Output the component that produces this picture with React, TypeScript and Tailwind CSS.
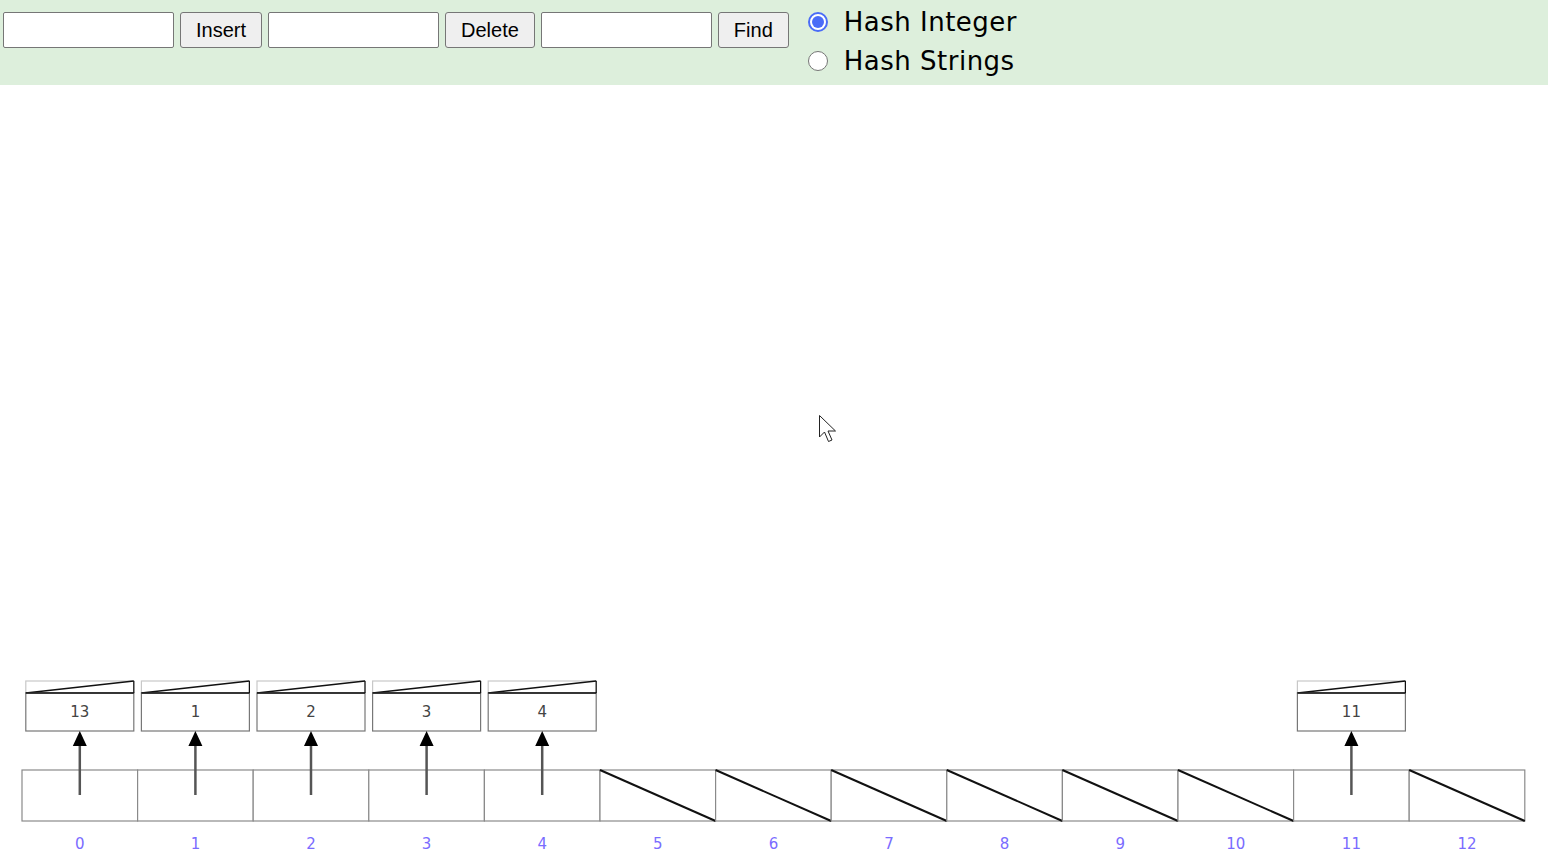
const CELL_X = 22;
const CELL_W = 115.6;
const CELL_Y = 770;
const CELL_H = 51;
const BUCKETS = 13;

// bucket index -> value stored in its single node
const nodes: Record<number, string> = { 0: '13', 1: '1', 2: '2', 3: '3', 4: '4', 11: '11' };

function Radio({ checked, label }: { checked?: boolean; label: string }) {
  return (
    <label className="flex items-center gap-[16px] h-[39px]">
      {checked ? (
        <span className="flex h-[20px] w-[20px] items-center justify-center rounded-full border-2 border-[#4a6cf7] bg-white">
          <span className="h-[12px] w-[12px] rounded-full bg-[#4a6cf7]" />
        </span>
      ) : (
        <span className="h-[20px] w-[20px] rounded-full border-[1.5px] border-[#767676] bg-white" />
      )}
      <span className="text-[26px] leading-none tracking-[0.5px] text-black font-['DejaVu_Sans',sans-serif]">
        {label}
      </span>
    </label>
  );
}

function HashTable() {
  return (
    <svg width={1548} height={767} viewBox="0 85 1548 767" className="block">
      {Array.from({ length: BUCKETS }, (_, i) => {
        const x = CELL_X + i * CELL_W;
        const cx = x + CELL_W / 2;
        const value = nodes[i];
        return (
          <g key={i}>
            <rect x={x} y={CELL_Y} width={CELL_W} height={CELL_H} fill="white" stroke="#8a8a8a" strokeWidth={1.2} />
            {value === undefined && (
              <line x1={x} y1={CELL_Y} x2={x + CELL_W} y2={CELL_Y + CELL_H} stroke="#111" strokeWidth={2} />
            )}
            <text
              x={cx}
              y={849}
              textAnchor="middle"
              fontSize={15}
              fill="#7a6cff"
              fontFamily="'DejaVu Sans', sans-serif"
            >
              {i}
            </text>
            {value !== undefined && (
              <g>
                <rect x={cx - 54} y={681} width={108} height={12} fill="white" stroke="#c8c8c8" strokeWidth={1.2} />
                <line x1={cx - 54} y1={693} x2={cx + 54} y2={681} stroke="#111" strokeWidth={1.5} />
                <rect x={cx - 54} y={693} width={108} height={38} fill="white" stroke="#777" strokeWidth={1.2} />
                <line x1={cx - 54} y1={693} x2={cx + 54} y2={693} stroke="#111" strokeWidth={1.5} />
                <line x1={cx + 54} y1={681} x2={cx + 54} y2={693} stroke="#111" strokeWidth={1.2} />
                <text
                  x={cx}
                  y={717}
                  textAnchor="middle"
                  fontSize={15}
                  fill="#444"
                  fontFamily="'DejaVu Sans', sans-serif"
                >
                  {value}
                </text>
                <line x1={cx} y1={795} x2={cx} y2={744} stroke="#555" strokeWidth={2.5} />
                <polygon points={`${cx},731 ${cx - 7},746 ${cx + 7},746`} fill="#000" />
              </g>
            )}
          </g>
        );
      })}
      {/* mouse pointer */}
      <path
        d="M819.5 415.5 L819.5 437 L824.5 432 L828.5 441.5 L832 440 L828 431 L835.5 431 Z"
        fill="white"
        stroke="#222"
        strokeWidth={1}
        strokeLinejoin="round"
      />
    </svg>
  );
}

export default function App() {
  const input =
    'h-[36px] w-[171px] rounded-[2px] border border-[#767676] bg-white px-1 text-[20px] outline-none';
  const button =
    'h-[36px] rounded-[3px] border border-[#767676] bg-[#efefef] text-[20px] text-black';

  return (
    <div className="w-[1548px] h-[852px] overflow-hidden bg-white font-['Liberation_Sans',Arial,sans-serif]">
      <div className="flex h-[85px] items-start bg-[#ddefdc] pl-[3px]">
        <div className="mt-[12px] flex items-center gap-[6px]">
          <input className={input} />
          <button className={`${button} px-[15px]`}>Insert</button>
          <input className={input} />
          <button className={`${button} px-[15px]`}>Delete</button>
          <input className={input} />
          <button className={`${button} px-[15px]`}>Find</button>
        </div>
        <div className="ml-[19px] mt-[2px] flex flex-col">
          <Radio checked label="Hash Integer" />
          <Radio label="Hash Strings" />
        </div>
      </div>
      <HashTable />
    </div>
  );
}
